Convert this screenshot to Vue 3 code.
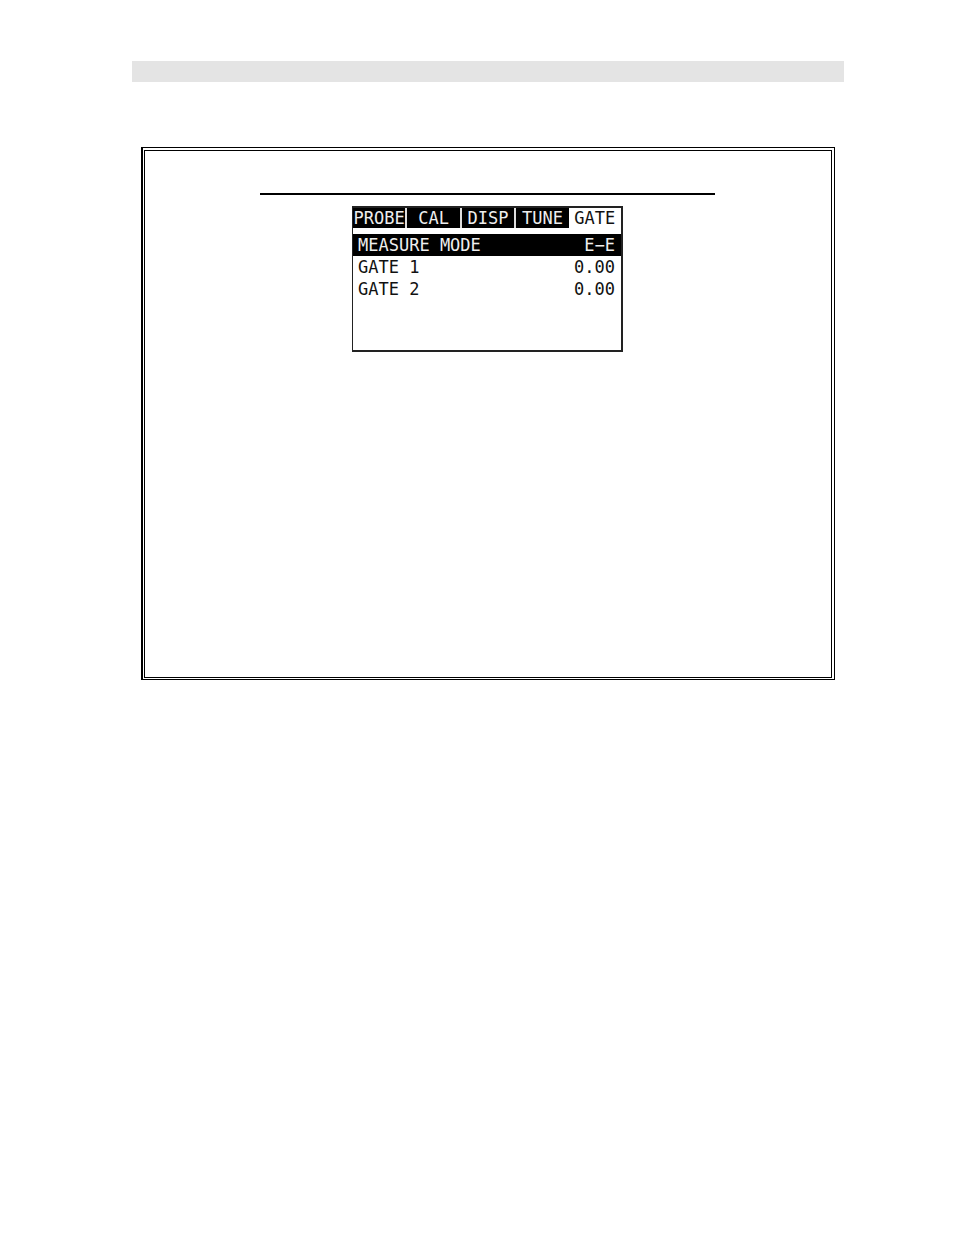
<script setup>
import { ref } from 'vue'

const tabs = ['PROBE', 'CAL', 'DISP', 'TUNE', 'GATE']
const rows = [
  { label: 'MEASURE MODE', value: 'E−E' },
  { label: 'GATE 1', value: '0.00' },
  { label: 'GATE 2', value: '0.00' },
]

const activeTab = ref('GATE')
const activeRow = ref(0)
</script>

<template>
  <div class="page">
    <header class="band"></header>

    <main class="frame">
      <div class="frame-inner">
        <hr class="rule">

        <section class="lcd">
          <nav class="tabs">
            <button
              v-for="tab in tabs"
              :key="tab"
              type="button"
              :class="['tab', { 'tab--on': tab === activeTab }]"
              @click="activeTab = tab"
            >{{ tab }}</button>
          </nav>

          <div class="rows">
            <button
              v-for="(row, i) in rows"
              :key="row.label"
              type="button"
              :class="['row', { 'row--on': i === activeRow }]"
              @click="activeRow = i"
            >
              <span>{{ row.label }}</span>
              <span>{{ row.value }}</span>
            </button>
          </div>
        </section>
      </div>
    </main>
  </div>
</template>

<style>
body {
  margin: 0;
  background: #fff;
}
</style>

<style scoped>
.page {
  padding: 61px 110px 40px 132px;
}

.band {
  height: 21px;
  background: #e4e4e4;
}

/* double frame, heavier on the left */
.frame {
  margin: 65px 9px 0;
  padding: 2px 2px 1px 1px;
  border: 1px solid #000;
  border-left-width: 2px;
}

.frame-inner {
  display: flex;
  flex-direction: column;
  align-items: center;
  min-height: 484px;
  padding: 42px 116px 0 115px;
  border: 1px solid #000;
}

.rule {
  width: 100%;
  height: 2px;
  margin: 0 0 11px;
  border: 0;
  background: #000;
}

.lcd {
  display: flex;
  flex-direction: column;
  box-sizing: border-box;
  width: 271px;
  min-height: 146px;
  border: 2px solid #222;
  border-width: 2px 2px 2px 1px;
  font-family: "DejaVu Sans Mono", "Liberation Mono", monospace;
}

.tabs {
  display: flex;
  margin-bottom: 6px;
}

.tab {
  flex: 1 1 0;
  height: 20px;
  padding: 0;
  border: 0;
  background: #000;
  color: #eee;
  font: inherit;
  font-size: 17px;
  line-height: 20px;
  text-align: center;
}

/* divider between two dark tabs */
.tab:not(.tab--on):has(+ .tab:not(.tab--on)) {
  border-right: 2px solid #ddd;
}

.tab--on {
  background: #fff;
  color: #111;
}

.rows {
  display: flex;
  flex-direction: column;
}

.row {
  display: flex;
  justify-content: space-between;
  height: 22px;
  padding: 0 6px 0 5px;
  border: 0;
  background: #fff;
  color: #111;
  font: inherit;
  font-size: 17px;
  line-height: 22px;
}

.row--on {
  background: #000;
  color: #eee;
}
</style>
